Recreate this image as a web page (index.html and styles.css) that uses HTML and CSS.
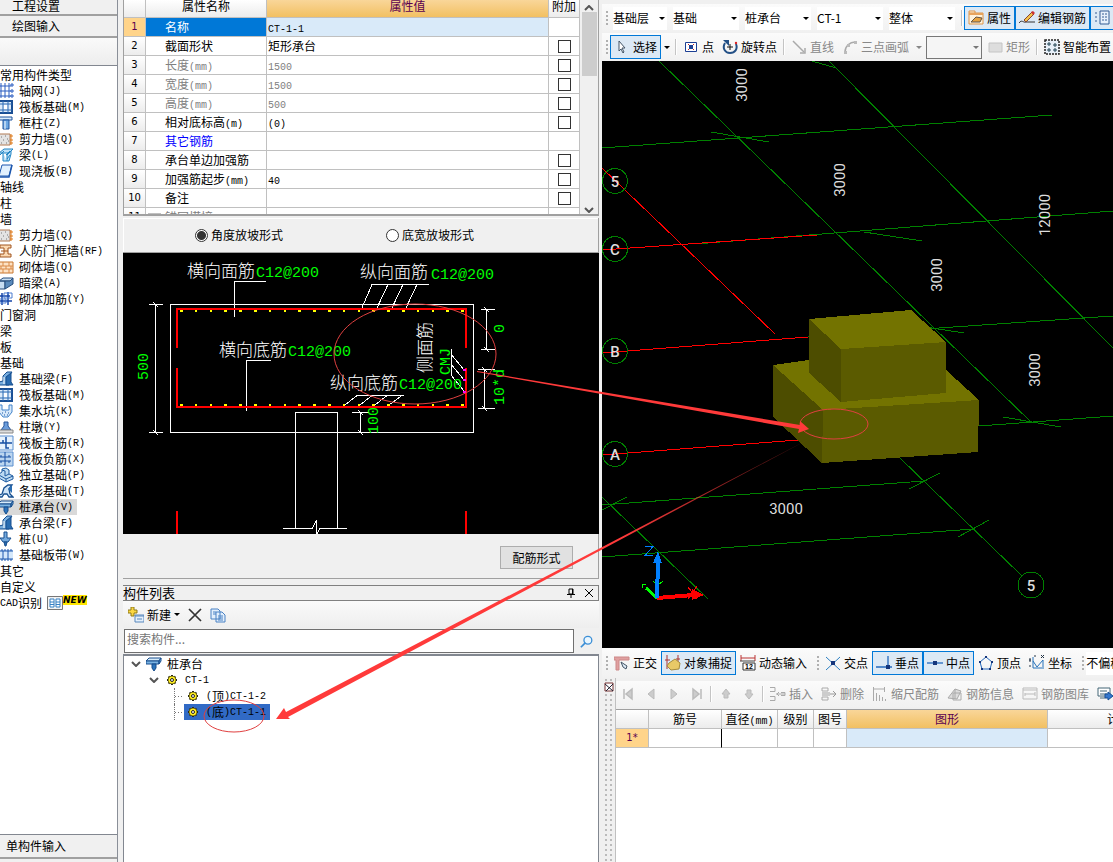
FILE: index.html
```
<!DOCTYPE html>
<html lang="zh-CN">
<head>
  <meta charset="utf-8">
  <title>构件定义</title>
  <link rel="stylesheet" href="styles.css">
</head>
<body>
  <!-- icon set -->
  <svg class="defs" width="0" height="0">
    <symbol id="i-grid" viewBox="0 0 16 16"><path d="M0 3h13M0 8h13M0 13h13M3 0v15M7 0v15M11 0v15" stroke="#2a5cc0" fill="none"/><path d="M13 1h2v2h-2zM13 7h2v2h-2zM13 12h2v2h-2z" fill="none" stroke="#2a5cc0"/></symbol>
    <symbol id="i-raft" viewBox="0 0 16 16"><path d="M1 2h13v12H1z" fill="#dcebfa" stroke="#1a4f94" stroke-width="2"/><path d="M1 5h13M1 11h13M5 2v12M10 2v12" stroke="#2f6cb5"/><path d="M6 6h3v4H6z" fill="#fff"/></symbol>
    <symbol id="i-column" viewBox="0 0 16 16"><path d="M1 2h13v3H1z" fill="#d9ecfb" stroke="#1f559f"/><path d="M5 5h6v9H5z" fill="#6ea8e4" stroke="#1f559f"/><path d="M7 6v8" stroke="#fff"/></symbol>
    <symbol id="i-wall" viewBox="0 0 16 16"><path d="M0 3h12v11H0z" fill="#e3e3e3" stroke="#b07a55"/><path d="M3 6h1M7 5h1M5 9h1M9 8h1M3 12h1M8 12h1M10 10h1" stroke="#777"/><path d="M13 3v11M12 5h3M12 9h3M12 12h3" stroke="#e07a18"/></symbol>
    <symbol id="i-beam" viewBox="0 0 16 16"><path d="M1 6l5-4h9l-4 4zM5 6v8h4V8l4-4v3l-2 7H9" fill="#bfe1f7" stroke="#2385c4"/><path d="M2 8l4-4M8 8l4-4M9 12l3-4" stroke="#2385c4"/></symbol>
    <symbol id="i-slab" viewBox="0 0 16 16"><path d="M4 2h10l-3 11H1z" fill="#e2f1fe" stroke="#1d57ae"/><path d="M1 13v1h10l3-12" fill="none" stroke="#1d57ae" stroke-width="1.5"/></symbol>
    <symbol id="i-door" viewBox="0 0 16 16"><path d="M2 2h11v3h-3v6h3v3H2v-3h4V5H2z" fill="#fbd9b3" stroke="#a1541f"/><path d="M3 8h7" stroke="#a1541f"/></symbol>
    <symbol id="i-brick" viewBox="0 0 16 16"><path d="M0 3h15v11H0z" fill="#fde2c4" stroke="#c8762f"/><path d="M0 7h15M0 10h15M5 3v4M11 3v4M3 7v3M8 7v3M13 7v3M5 10v4M11 10v4" stroke="#d98a48"/></symbol>
    <symbol id="i-box" viewBox="0 0 16 16"><path d="M1 6l4-3h10l-3 3zM1 6h6v8H1z" fill="#c8def2" stroke="#244d7c"/><path d="M7 6h5l3-3v6l-8 5z" fill="#5a8abb" stroke="#244d7c"/></symbol>
    <symbol id="i-rebar" viewBox="0 0 16 16"><path d="M0 5h12M0 10h14M4 2v12M10 1v13" stroke="#1646a8" stroke-width="1.5"/><path d="M6 2h8v5H6zM1 8h7v4H1z" fill="none" stroke="#4a7dd0"/></symbol>
    <symbol id="i-fbeam" viewBox="0 0 16 16"><path d="M1 14v-3l4-1V5l4-4h5l-3 4v9z" fill="#79aede" stroke="#174f8f"/><path d="M8 6l5-4v9l2 3H8z" fill="#2a6db1" stroke="#174f8f"/><path d="M6 6v7" stroke="#fff"/></symbol>
    <symbol id="i-pit" viewBox="0 0 16 16"><path d="M1 2h3v5h7V2h3v7l-4 5H5L1 9z" fill="#d6e8fa" stroke="#4284ca"/><path d="M4 10h1M7 9h1M10 10h1M6 12h1M9 12h1" stroke="#1b58a6"/></symbol>
    <symbol id="i-pier" viewBox="0 0 16 16"><path d="M6 3h4v4l3 4H3l3-4z" fill="#6c9ddb" stroke="#26569b"/><path d="M0 11h15v3H0z" fill="#ddd" stroke="#888"/></symbol>
    <symbol id="i-main" viewBox="0 0 16 16"><path d="M0 1h15v14H0z" fill="#e6f1fc" stroke="#5b8fd0"/><path d="M2 8h12M8 2v6M5 5v3M8 8v5h3" stroke="#174fa3" stroke-width="1.5" fill="none"/></symbol>
    <symbol id="i-neg" viewBox="0 0 16 16"><path d="M0 1h15v14H0z" fill="#bcd6f0" stroke="#5b8fd0"/><path d="M1 6h12M1 10h12M7 1v14M3 4v2M11 4v2M3 10v2M11 10v2" stroke="#174fa3"/></symbol>
    <symbol id="i-iso" viewBox="0 0 16 16"><path d="M1 7l3-2V2l4-1 3 2v4l4 2v3l-7 3-7-4z" fill="#bcdaf3" stroke="#1e5ba0"/><path d="M4 3l3 1v5l4-2M1 8l7 4 7-3M8 12v3" fill="none" stroke="#1e5ba0"/></symbol>
    <symbol id="i-strip" viewBox="0 0 16 16"><path d="M1 14v-2l3-1 2-6 4-3h4l-3 4 1 5 3 3h-4l-2-3-3 0-2 3z" fill="#cfe4f7" stroke="#174f8f" stroke-width="1.3"/><path d="M10 6l4-4v8z" fill="#2a6db1"/></symbol>
    <symbol id="i-cap" viewBox="0 0 16 16"><path d="M0 5l3-3h12l-2 3z" fill="#d6ebfa" stroke="#164d8c"/><path d="M0 5h13v3H0zM13 5l2-3v3l-2 3z" fill="#7ab4e4" stroke="#164d8c"/><path d="M6 8h4v4l-2 3-2-3z" fill="#2d75bc" stroke="#164d8c"/></symbol>
    <symbol id="i-pile" viewBox="0 0 16 16"><path d="M6 1h3v6h4l-3 4H5L2 7h4z" fill="#74a9dc" stroke="#174f8f"/><path d="M6 11h3l-1 4H7z" fill="#2a6db1" stroke="#174f8f"/></symbol>
    <symbol id="i-band" viewBox="0 0 16 16"><path d="M0 3h15v10H0z" fill="#d5e8fb"/><path d="M0 4h15M0 12h15M5 4v8M10 4v8" stroke="#1d57ae"/><path d="M0 3h15M0 13h15" stroke="#1d57ae" stroke-dasharray="2 1"/></symbol>
    <symbol id="i-gear" viewBox="0 0 16 16"><path d="M8 3v10M3 8h10M4.500 4.500l7 7M11.500 4.500l-7 7" stroke="#222" stroke-width="2"/><circle cx="8" cy="8" r="4" fill="#ffee20" stroke="#443d00" stroke-width=".7"/><circle cx="8" cy="8" r="1.500" fill="#fff" stroke="#222"/></symbol>
    <symbol id="i-cursor" viewBox="0 0 16 16"><path d="M5 2v10l2-2 2 4 1-1-2-4h3z" fill="#fff" stroke="#456"/></symbol>
    <symbol id="i-point" viewBox="0 0 16 16"><path d="M2.500 3.500h11v9h-11z" fill="#fff" stroke="#1c3f94"/><path d="M5 5l6 6M11 5l-6 6" stroke="#c22"/><path d="M6 6h4v4H6z" fill="#1c3f94"/></symbol>
    <symbol id="i-rotate" viewBox="0 0 16 16"><path d="M3 4c-3 5 0 10 5 10s8-4 6-9" fill="none" stroke="#235086" stroke-width="2"/><path d="M1 1h6v6z" fill="#235086"/><path d="M5 8h6M8 5v6" stroke="#111"/><circle cx="14" cy="4" r="1.2" fill="#d22"/></symbol>
    <symbol id="i-line" viewBox="0 0 16 16"><path d="M2 2l11 11" stroke="#aaa" stroke-width="1.5"/><path d="M14 9v5H9" fill="none" stroke="#aaa" stroke-width="1.5"/></symbol>
    <symbol id="i-arc" viewBox="0 0 16 16"><path d="M3 13C3 7 8 3 13 3" fill="none" stroke="#aaa" stroke-width="1.5"/><path d="M2 12h3v3H2zM12 2h3v3h-3zM5 5h3v3H5z" fill="#bbb"/></symbol>
    <symbol id="i-rect" viewBox="0 0 16 16"><path d="M2 4h13v9H2z" fill="#ddd" stroke="#c4c4c4"/></symbol>
    <symbol id="i-smart" viewBox="0 0 16 16"><path d="M1 1h14v14H1z" fill="#e9f1fa" stroke="#222" stroke-width="1.5" stroke-dasharray="2 1"/><path d="M3 5h4M5 3v4M9 6h4M11 4v4M3 11h4M5 9v4M9 11h4M11 9v4" stroke="#245"/></symbol>
    <symbol id="i-prop" viewBox="0 0 16 16"><path d="M1 3V1h6v2M1 3h14v11H1z" fill="#fff3dc" stroke="#dd9448"/><path d="M3 12l5-5 6 1-2 4z" fill="#e8a440" stroke="#654"/><path d="M1 3h14v2H1z" fill="#e8a45c"/></symbol>
    <symbol id="i-edit" viewBox="0 0 16 16"><path d="M0 13c3-4 4 0 7-1h9" fill="none" stroke="#333"/><path d="M5 10l8-8 2 2-8 8z" fill="#f3c24c" stroke="#843"/><path d="M12 2l2-1 2 2-2 2z" fill="#c33"/></symbol>
    <symbol id="i-panel" viewBox="0 0 16 16"><path d="M6 1h9v13H6z" fill="#e8f1fc" stroke="#345c94"/><path d="M8 4h5M8 7h5M8 10h5M1 3h3M1 7h3M1 11h3" stroke="#345c94" stroke-dasharray="2 1"/></symbol>
    <symbol id="i-ortho" viewBox="0 0 16 16"><path d="M0 2h15v3H5v10H2V5H0z" fill="#e0a0a0" stroke="#c88"/><path d="M7 7l6 4-1 3-3-2z" fill="#dbe7f3" stroke="#456"/></symbol>
    <symbol id="i-snap" viewBox="0 0 16 16"><path d="M2 0v14M0 5h5M13 0v7M11 4h4" stroke="#a33"/><path d="M4 8l6-4 5 4-1 6-8 1-4-4z" fill="#e9c967" stroke="#a58b3d"/></symbol>
    <symbol id="i-dyn" viewBox="0 0 16 16"><path d="M1 0v6M15 0v6M1 3h14" stroke="#b33"/><path d="M0 6h15" stroke="#444"/><path d="M3 8h12v7H3z" fill="#fff" stroke="#333"/><text x="5" y="14" class="tiny">12</text></symbol>
    <symbol id="i-cross" viewBox="0 0 16 16"><path d="M1 2l14 13M15 2L1 15" stroke="#2d81c4"/><path d="M6 6h4v4H6z" fill="#15367c"/></symbol>
    <symbol id="i-perp" viewBox="0 0 16 16"><path d="M0 12h16M12 1v13" stroke="#2469bd" stroke-width="1.3"/><path d="M10 10h4v4h-4z" fill="#15367c"/></symbol>
    <symbol id="i-mid" viewBox="0 0 16 16"><path d="M0 8h16" stroke="#2469bd" stroke-width="1.3"/><path d="M6 6h4v4H6z" fill="#15367c"/></symbol>
    <symbol id="i-top" viewBox="0 0 16 16"><path d="M8 2l6 5-2 7H4L2 7z" fill="none" stroke="#2469bd"/><path d="M7 1h2v2H7zM1 6h2v2H1zM13 6h2v2h-2zM3 13h2v2H3zM11 13h2v2h-2z" fill="#15367c"/></symbol>
    <symbol id="i-coord" viewBox="0 0 16 16"><path d="M4 2v11h11M4 6l4 6 6-7v7" fill="none" stroke="#2672ba"/><path d="M0 5h2M1 3v4M0 11h2M5 1h2M12 0l3 3M15 0l-3 3" stroke="#234"/></symbol>
    <symbol id="i-first" viewBox="0 0 16 16"><path d="M4 3v10M12 3v10L6 8z" fill="#ccc" stroke="#bbb" stroke-width="1.5"/></symbol>
    <symbol id="i-prev" viewBox="0 0 16 16"><path d="M11 3v10L5 8z" fill="#ccc" stroke="#bbb"/></symbol>
    <symbol id="i-next" viewBox="0 0 16 16"><path d="M5 3v10l6-5z" fill="#ccc" stroke="#bbb"/></symbol>
    <symbol id="i-last" viewBox="0 0 16 16"><path d="M12 3v10M4 3v10l6-5z" fill="#ccc" stroke="#bbb" stroke-width="1.5"/></symbol>
    <symbol id="i-up" viewBox="0 0 16 16"><path d="M8 3l4 5h-2v4H6V8H4z" fill="#ccc" stroke="#bbb"/></symbol>
    <symbol id="i-down" viewBox="0 0 16 16"><path d="M8 13l4-5h-2V4H6v4H4z" fill="#ccc" stroke="#bbb"/></symbol>
    <symbol id="i-insert" viewBox="0 0 16 16"><path d="M0 1.500h5v4H0M0 10.500h5v4H0M6 8h9M9 6L7 8l2 2M11 6.500h4v3h-4" fill="none" stroke="#aaa"/></symbol>
    <symbol id="i-delete" viewBox="0 0 16 16"><path d="M1 2h6v3H1zM1 11h6v3H1z" fill="none" stroke="#aaa"/><path d="M1 6h8v4H1z" fill="#ccc"/><path d="M9 8h6M12 5l3 3-3 3" fill="none" stroke="#999"/></symbol>
    <symbol id="i-scale" viewBox="0 0 16 16"><path d="M1.500 1v14M12.500 1v5M2 3h10M4.500 7v8M7.500 9v6M10.500 11v4M13.500 13v2" stroke="#aaa"/></symbol>
    <symbol id="i-info" viewBox="0 0 16 16"><path d="M1 12l7-9 6 2-4 8z" fill="#ddd" stroke="#aaa"/><path d="M6 7h8v7H6zM8 3v10" fill="none" stroke="#aaa"/></symbol>
    <symbol id="i-lib" viewBox="0 0 16 16"><path d="M1 2h14v11H1zM1 4h14M3 8h10M3 10V7M13 6v4" fill="none" stroke="#bbb"/></symbol>
    <symbol id="i-export" viewBox="0 0 16 16"><path d="M1 2h12v8H1zM3 5h7M3 8h7M3 12h5" fill="#fff" stroke="#467"/><path d="M8 8h3V6l5 4-5 4v-2H8z" fill="#3478cf" stroke="#174f94"/></symbol>
  </svg>

  <div class="app">
    <aside class="sidebar">
      <button class="nav-btn nav-top">工程设置</button>
      <button class="nav-btn">绘图输入</button>
      <div class="nav-strip"></div>
      <ul class="types">
        <li>常用构件类型</li>
        <li class="item"><svg><use href="#i-grid"/></svg>轴网<i>(J)</i></li>
        <li class="item"><svg><use href="#i-raft"/></svg>筏板基础<i>(M)</i></li>
        <li class="item"><svg><use href="#i-column"/></svg>框柱<i>(Z)</i></li>
        <li class="item"><svg><use href="#i-wall"/></svg>剪力墙<i>(Q)</i></li>
        <li class="item"><svg><use href="#i-beam"/></svg>梁<i>(L)</i></li>
        <li class="item"><svg><use href="#i-slab"/></svg>现浇板<i>(B)</i></li>
        <li>轴线</li>
        <li>柱</li>
        <li>墙</li>
        <li class="item"><svg><use href="#i-wall"/></svg>剪力墙<i>(Q)</i></li>
        <li class="item"><svg><use href="#i-door"/></svg>人防门框墙<i>(RF)</i></li>
        <li class="item"><svg><use href="#i-brick"/></svg>砌体墙<i>(Q)</i></li>
        <li class="item"><svg><use href="#i-box"/></svg>暗梁<i>(A)</i></li>
        <li class="item"><svg><use href="#i-rebar"/></svg>砌体加筋<i>(Y)</i></li>
        <li>门窗洞</li>
        <li>梁</li>
        <li>板</li>
        <li>基础</li>
        <li class="item"><svg><use href="#i-fbeam"/></svg>基础梁<i>(F)</i></li>
        <li class="item"><svg><use href="#i-raft"/></svg>筏板基础<i>(M)</i></li>
        <li class="item"><svg><use href="#i-pit"/></svg>集水坑<i>(K)</i></li>
        <li class="item"><svg><use href="#i-pier"/></svg>柱墩<i>(Y)</i></li>
        <li class="item"><svg><use href="#i-main"/></svg>筏板主筋<i>(R)</i></li>
        <li class="item"><svg><use href="#i-neg"/></svg>筏板负筋<i>(X)</i></li>
        <li class="item"><svg><use href="#i-iso"/></svg>独立基础<i>(P)</i></li>
        <li class="item"><svg><use href="#i-strip"/></svg>条形基础<i>(T)</i></li>
        <li class="item active"><svg><use href="#i-cap"/></svg>桩承台<i>(V)</i></li>
        <li class="item"><svg><use href="#i-fbeam"/></svg>承台梁<i>(F)</i></li>
        <li class="item"><svg><use href="#i-pile"/></svg>桩<i>(U)</i></li>
        <li class="item"><svg><use href="#i-band"/></svg>基础板带<i>(W)</i></li>
        <li>其它</li>
        <li>自定义</li>
        <li class="cad"><i>CAD</i>识别<svg viewBox="0 0 16 16"><path d="M.5 1.500h15v13H.5z" fill="#f2f2f2" stroke="#777"/><path d="M3 4h4v8H3zM9 4h4v8H9zM3 7h4M9 7h4M3 9.500h4M9 9.500h4" fill="#fff" stroke="#3580c4"/></svg><b>NEW</b></li>
      </ul>
      <button class="nav-btn nav-bottom">单构件输入</button>
    </aside>

    <section class="middle">
      <div class="props">
        <table class="grid">
          <colgroup><col class="c-num"><col class="c-name"><col class="c-val"><col class="c-add"></colgroup>
          <thead><tr><th></th><th>属性名称</th><th class="hot">属性值</th><th>附加</th></tr></thead>
          <tbody>
            <tr class="current"><th>1</th><td>名称</td><td><i>CT-1-1</i></td><td></td></tr>
            <tr><th>2</th><td>截面形状</td><td>矩形承台</td><td><input type="checkbox" aria-label="截面形状"></td></tr>
            <tr class="off"><th>3</th><td>长度<i>(mm)</i></td><td><i>1500</i></td><td><input type="checkbox" aria-label="长度"></td></tr>
            <tr class="off"><th>4</th><td>宽度<i>(mm)</i></td><td><i>1500</i></td><td><input type="checkbox" aria-label="宽度"></td></tr>
            <tr class="off"><th>5</th><td>高度<i>(mm)</i></td><td><i>500</i></td><td><input type="checkbox" aria-label="高度"></td></tr>
            <tr><th>6</th><td>相对底标高<i>(m)</i></td><td><i>(0)</i></td><td><input type="checkbox" aria-label="相对底标高"></td></tr>
            <tr class="link"><th>7</th><td>其它钢筋</td><td></td><td></td></tr>
            <tr><th>8</th><td>承台单边加强筋</td><td></td><td><input type="checkbox" aria-label="承台单边加强筋"></td></tr>
            <tr><th>9</th><td>加强筋起步<i>(mm)</i></td><td><i>40</i></td><td><input type="checkbox" aria-label="加强筋起步"></td></tr>
            <tr><th>10</th><td>备注</td><td></td><td><input type="checkbox" aria-label="备注"></td></tr>
            <tr class="off group"><th>11</th><td><span class="toggle"></span>锚固搭接</td><td></td><td></td></tr>
          </tbody>
        </table>
        <div class="scroll">
          <button aria-label="向上"><svg viewBox="0 0 10 6"><path d="M1 5l4-4 4 4"/></svg></button>
          <div class="thumb"></div>
          <button class="down" aria-label="向下"><svg viewBox="0 0 10 6"><path d="M1 1l4 4 4-4"/></svg></button>
        </div>
      </div>

      <div class="slope">
        <label><input type="radio" name="slope" checked>角度放坡形式</label>
        <label><input type="radio" name="slope">底宽放坡形式</label>
      </div>

      <svg class="section" viewBox="123 253 476 281">
        <path class="w" d="M170.500 304.500h303v128h-303zM295.500 528v-115.500h42V528M283 528.500h29l4-7v14l4-7h27"/>
        <path class="w" d="M266 281.500h-31.500V317M271 360.500h-24.500V411M149 304.500h14M149 432.500h14M155.500 304.500v128M153 302l5 5M153 430l5 5"/>
        <path class="w" d="M429 284.500h-57L361 310M388 284.500L376 310M403 284.500L391 310M417 284.500L405 310M404 395.500h-47L345 405M372 395.500L360 405M387 395.500L375 405M402 395.500L389 405"/>
        <path class="w" d="M481 309.500h14M481 349.500h14M486.500 309v40M484 307l5 5M484 347l5 5M478 369.500h17M478 408.500h17M484.500 369v39M482 367l5 5M482 406l5 5M352 412.500h17M360.500 412v20M358 410l5 5M358 430l5 5"/>
        <path class="w" d="M451.500 349v27M451 354l13 16M451 364l13 16M451 375l13 16"/>
        <path class="r" d="M177 348v-39h289v39M177 368v39h289v-39M177 511v23M466 511v23"/>
        <path class="dots" d="M180 310.500h287M180 404.500h287"/>
        <path d="M463 369h3v2h-3zM463 379h3v2h-3zM463 391h3v2h-3z" fill="#f0f"/>
        <g class="cn"><text x="187" y="277">横向面筋</text><text x="360" y="278">纵向面筋</text><text x="219" y="356">横向底筋</text><text x="330" y="389">纵向底筋</text><text transform="translate(431 373) rotate(-90)">侧面筋</text></g>
        <g class="en"><text x="256" y="277">C12@200</text><text x="431" y="279">C12@200</text><text x="288" y="356">C12@200</text><text x="399" y="389">C12@200</text>
          <text transform="translate(148 380) rotate(-90)">500</text><text transform="translate(450 375) rotate(-90)">CMJ</text><text transform="translate(504 333) rotate(-90)">0</text><text transform="translate(504 405) rotate(-90)">10*d</text><text transform="translate(378 434) rotate(-90)">100</text></g>
      </svg>
      <div class="section-foot"><button>配筋形式</button></div>

      <div class="list-title"><span>构件列表</span>
        <button aria-label="固定"><svg viewBox="0 0 10 10"><path d="M3 1h4v5H3zM1 6.500h8M5 6v4M6.500 1v5"/></svg></button>
        <button aria-label="关闭"><svg viewBox="0 0 10 10"><path d="M1 1l8 8M9 1L1 9"/></svg></button>
      </div>
      <div class="list-bar">
        <button><svg viewBox="0 0 16 16"><path d="M3 0h3v3h3v3H6v3H3V6H0V3h3z" fill="#fbd743" stroke="#8f7a18"/><path d="M7 8h9v7H7z" fill="#e4f0fc" stroke="#5987bc"/><path d="M7 9h9M9 12h5" stroke="#5987bc"/></svg>新建<span class="caret"></span></button>
        <button aria-label="删除"><svg viewBox="0 0 16 16"><path d="M2 2l12 12M14 2L2 14" stroke="#333" stroke-width="1.700"/></svg></button>
        <button aria-label="复制"><svg viewBox="0 0 16 16"><path d="M1 2h7l2 2v8H1zM6 5h6l3 3v7H6z" fill="#e3effc" stroke="#4a82c4"/><path d="M3 5h3M3 7h3M8 9h5M8 11h5M8 13h5" stroke="#4a82c4"/></svg></button>
      </div>
      <div class="search">
        <input type="text" placeholder="搜索构件..." aria-label="搜索构件">
        <button aria-label="搜索"><svg viewBox="0 0 16 16"><circle cx="9" cy="6" r="4.500" fill="#e9f6ff" stroke="#3c8fd6" stroke-width="1.500"/><path d="M6 9l-5 5" stroke="#3c8fd6" stroke-width="2"/></svg></button>
      </div>
      <ul class="tree">
        <li><svg class="chev" viewBox="0 0 10 6"><path d="M1 1l4 4 4-4"/></svg><svg><use href="#i-cap"/></svg>桩承台</li>
        <li class="lv2"><svg class="chev" viewBox="0 0 10 6"><path d="M1 1l4 4 4-4"/></svg><svg><use href="#i-gear"/></svg><i>CT-1</i></li>
        <li class="lv3"><span class="node"><svg><use href="#i-gear"/></svg><i>(</i>顶<i>)CT-1-2</i></span></li>
        <li class="lv3"><span class="node picked"><svg><use href="#i-gear"/></svg><i>(</i>底<i>)CT-1-1</i></span></li>
      </ul>
    </section>

    <main class="work">
      <div class="bar bar-top">
        <span class="grip"></span>
        <label class="combo short"><select aria-label="楼层"><option>基础层</option></select></label>
        <label class="combo"><select aria-label="类别"><option>基础</option></select></label>
        <label class="combo"><select aria-label="类型"><option>桩承台</option></select></label>
        <label class="combo"><select aria-label="构件"><option>CT-1</option></select></label>
        <label class="combo"><select aria-label="范围"><option>整体</option></select></label>
        <span class="sep"></span>
        <button class="tool on"><svg><use href="#i-prop"/></svg>属性</button>
        <button class="tool on"><svg><use href="#i-edit"/></svg>编辑钢筋</button>
        <button class="tool on" aria-label="列表"><svg><use href="#i-panel"/></svg></button>
      </div>
      <div class="bar bar-draw">
        <span class="grip"></span>
        <button class="tool on"><svg><use href="#i-cursor"/></svg>选择</button>
        <button class="drop" aria-label="更多"><span class="caret"></span></button>
        <span class="sep"></span>
        <button class="tool"><svg><use href="#i-point"/></svg>点</button>
        <button class="tool"><svg><use href="#i-rotate"/></svg>旋转点</button>
        <span class="sep"></span>
        <button class="tool dim"><svg><use href="#i-line"/></svg>直线</button>
        <button class="tool dim"><svg><use href="#i-arc"/></svg>三点画弧</button>
        <button class="drop dim" aria-label="更多"><span class="caret"></span></button>
        <label class="combo boxed"><select aria-label="参数"><option></option></select></label>
        <button class="tool dim"><svg><use href="#i-rect"/></svg>矩形</button>
        <span class="sep"></span>
        <button class="tool"><svg><use href="#i-smart"/></svg>智能布置</button>
      </div>

      <svg class="view3d" viewBox="602 61 511 587" preserveAspectRatio="xMinYMin slice">
        <path class="axis" d="M602 148L1052 115M695 244L1113 211M808 337L1113 316M979 426L1113 416M602 505L924 481M602 557L973 529M659 61L1032 423M829 61L1113 348M900 458L1022 576M602 497L708 599"/>
        <path class="axis" d="M711 132l58 10M864 232l58 9M906 324l58 9M1003 417l58 10M909 489l31-16M958 537l31-17M602 510l25-13M812 61l24 7"/>
        <path class="red" d="M602 168L775 334M602 250L817 235M602 353L808 337M602 455L798 440"/>
        <circle cx="615" cy="181" r="12.500"/><circle cx="615" cy="249" r="12.500"/><circle cx="615" cy="351" r="12.500"/><circle cx="615" cy="454" r="12.500"/><circle cx="1031" cy="585" r="13"/>
        <path d="M773 365l36-5v-30l137 40 33 30-156 10z" fill="#737300"/>
        <path d="M773 365l50 45-1 53-49-46z" fill="#4d4d00"/>
        <path d="M823 410l156-10-1 52-156 11z" fill="#5b5b00"/>
        <path d="M809 319l102-9 35 32-105 7z" fill="#737300"/>
        <path d="M809 319l32 30v53l-32-29z" fill="#4d4d00"/>
        <path d="M841 349l105-7v51l-105 9z" fill="#5b5b00"/>
        <g class="dim3">
          <text class="mark" x="615" y="187">5</text><text class="mark" x="615" y="255">C</text><text class="mark" x="615" y="357">B</text><text class="mark" x="615" y="460">A</text><text class="mark" x="1031" y="591">5</text><text x="786" y="514">3000</text>
          <text transform="translate(747 85) rotate(-90)">3000</text><text transform="translate(845 180) rotate(-90)">3000</text><text transform="translate(942 275) rotate(-90)">3000</text><text transform="translate(1040 370) rotate(-90)">3000</text><text transform="translate(1050 215) rotate(-90)">12000</text>
        </g>
        <path d="M657 598l36-3" stroke="#f00" stroke-width="4"/><path d="M692 589l12 6-12 5z" fill="#f00"/><path d="M688 587l9 12M697 586l-9 13" stroke="#f00"/>
        <path d="M657 598l-11-10" stroke="#0f0" stroke-width="3"/><path d="M642 588v-4h4M653 581l5 4 5-4" stroke="#0f0" fill="none"/>
        <path d="M657 598l1-37" stroke="#0080ff" stroke-width="4"/><path d="M653 563l5-12 4 12z" fill="#0080ff"/><path d="M645 546.500h8l-8 9h8" stroke="#0080ff" fill="none"/>
      </svg>

      <div class="bar bar-snap">
        <span class="grip"></span>
        <button class="tool"><svg><use href="#i-ortho"/></svg>正交</button>
        <button class="tool on"><svg><use href="#i-snap"/></svg>对象捕捉</button>
        <button class="tool"><svg><use href="#i-dyn"/></svg>动态输入</button>
        <span class="grip second"></span>
        <button class="tool"><svg><use href="#i-cross"/></svg>交点</button>
        <button class="tool on"><svg><use href="#i-perp"/></svg>垂点</button>
        <button class="tool on"><svg><use href="#i-mid"/></svg>中点</button>
        <button class="tool"><svg><use href="#i-top"/></svg>顶点</button>
        <button class="tool"><svg><use href="#i-coord"/></svg>坐标</button>
        <span class="grip second"></span>
        <label class="combo"><select aria-label="偏移"><option>不偏移</option></select></label>
      </div>

      <div class="rebar">
        <div class="dock"><button aria-label="关闭"><svg viewBox="0 0 10 10"><path d="M1 1h8v8H1z" fill="#fff" stroke="#733"/><path d="M1 2l8 7M9 2L2 9" stroke="#223"/></svg></button></div>
        <div class="rebar-main">
          <div class="bar bar-edit">
            <button class="tool sq" aria-label="首条"><svg><use href="#i-first"/></svg></button>
            <button class="tool sq" aria-label="上一条"><svg><use href="#i-prev"/></svg></button>
            <button class="tool sq" aria-label="下一条"><svg><use href="#i-next"/></svg></button>
            <button class="tool sq" aria-label="末条"><svg><use href="#i-last"/></svg></button>
            <span class="sep"></span>
            <button class="tool sq" aria-label="上移"><svg><use href="#i-up"/></svg></button>
            <button class="tool sq" aria-label="下移"><svg><use href="#i-down"/></svg></button>
            <span class="sep"></span>
            <button class="tool dim"><svg><use href="#i-insert"/></svg>插入</button>
            <button class="tool dim"><svg><use href="#i-delete"/></svg>删除</button>
            <button class="tool dim"><svg><use href="#i-scale"/></svg>缩尺配筋</button>
            <button class="tool dim"><svg><use href="#i-info"/></svg>钢筋信息</button>
            <button class="tool dim"><svg><use href="#i-lib"/></svg>钢筋图库</button>
            <button class="tool sq" aria-label="导出"><svg><use href="#i-export"/></svg></button>
          </div>
          <div class="sheet">
            <table class="grid bars">
              <colgroup><col class="b-num"><col class="b-name"><col class="b-dia"><col class="b-lvl"><col class="b-fig"><col class="b-shape"><col class="b-calc"></colgroup>
              <thead><tr><th></th><th>筋号</th><th>直径<i>(mm)</i></th><th>级别</th><th>图号</th><th class="hot">图形</th><th>计算公式</th></tr></thead>
              <tbody><tr><th class="mark">1*</th><td class="edit"></td><td></td><td></td><td></td><td class="focus"></td><td></td></tr></tbody>
            </table>
          </div>
        </div>
      </div>
    </main>
  </div>

  <!-- red callouts drawn over the panels -->
  <svg class="marks" viewBox="0 0 1113 862" preserveAspectRatio="xMinYMin">
    <defs><linearGradient id="fade" x1="1" y1="0" x2="0" y2="0"><stop offset="0" stop-color="#ff3a3a" stop-opacity=".2"/><stop offset=".35" stop-color="#ff3a3a"/></linearGradient></defs>
    <ellipse cx="415" cy="354" rx="81" ry="50"/>
    <ellipse cx="834" cy="424" rx="34" ry="15"/>
    <ellipse cx="234" cy="716" rx="30" ry="16"/>
    <path d="M477 371l323 54v-4l9 8-11 4 1-4-322-57z" fill="#ff3a3a"/>
    <path d="M811 438L288 717l2 2-14 0 8-11 2 4z" fill="url(#fade)"/>
  </svg>
</body>
</html>
```
FILE: styles.css
```
* {
  box-sizing: border-box;
}

body {
  margin: 0;
  height: 100vh;
  overflow: hidden;
  background: #f0f0f0;
  color: #000;
  font: 12px/16px "Noto Sans CJK SC", sans-serif;
}

button, input, select {
  font: inherit;
  color: inherit;
}

button {
  padding: 0;
  border: 0;
  background: none;
  white-space: nowrap;
}

/* latin text inside labels */
i {
  font: 10px/10px "Liberation Mono", monospace;
}

ul {
  list-style: none;
  margin: 0;
  padding: 0;
}

svg {
  flex: none;
  fill: none;
}

.defs {
  position: absolute;
}

.app {
  display: flex;
  height: 100vh;
}

/* left navigation */
.sidebar {
  flex: 0 0 118px;
  display: flex;
  flex-direction: column;
  margin-right: 5px;
  border-right: 1px solid #8a8f98;
}

.nav-btn {
  height: 22px;
  padding-left: 12px;
  text-align: left;
  border-bottom: 2px solid #a0a0a0;
  background: #f0f0f0;
}

.nav-top {
  height: 16px;
  line-height: 12px;
  padding-bottom: 2px;
}

.nav-strip {
  height: 28px;
  border-bottom: 1px solid #828790;
  background: linear-gradient(#fafafa, #ededed);
}

.types {
  flex: 1;
  overflow: hidden;
  background: #fff;
  border-bottom: 1px solid #828790;
  padding-top: 1px;
}

.types li {
  display: flex;
  align-items: center;
  width: fit-content;
  height: 16px;
  white-space: nowrap;
}

.types svg, .tree svg, .tool svg, .list-bar svg {
  width: 16px;
  height: 16px;
}

.types i, .tree i {
  padding-top: 2px;
}

.types .item {
  margin-left: -2px;
  padding-right: 4px;
}

.item svg {
  margin-right: 5px;
}

.types .active {
  background: #d9d9d9;
}

.cad svg {
  margin-left: 5px;
}

.cad b {
  align-self: flex-start;
  font: italic bold 9px/10px "DejaVu Sans", sans-serif;
  background: #ffe500;
}

.nav-bottom {
  height: 24px;
  margin-bottom: 3px;
  padding-left: 6px;
}

/* properties */
.middle {
  flex: 0 0 476px;
  display: flex;
  flex-direction: column;
  margin-right: 3px;
}

.props {
  display: flex;
  flex: none;
  height: 216px;
  overflow: hidden;
  margin-bottom: 2px;
  border: 1px solid #a0a0a0;
  border-width: 0 1px 2px 1px;
  background: #fff;
}

.grid {
  table-layout: fixed;
  border-collapse: separate;
  border-spacing: 0;
  align-self: flex-start;
}

.grid th, .grid td {
  height: 19px;
  padding: 0;
  overflow: hidden;
  white-space: nowrap;
  border: solid #c0c0c0;
  border-width: 0 1px 1px 0;
  font-weight: normal;
  line-height: 16px;
}

.grid th {
  background: linear-gradient(#fff, #ececec);
}

.props .grid {
  width: 456px;
}

.props thead th {
  height: 18px;
  line-height: 12px;
  padding-bottom: 5px;
}

.grid .hot {
  background: linear-gradient(#f9d699, #f2c062);
  color: #5a0050;
}

.c-num { width: 22px; }
.c-name { width: 121px; }
.c-val { width: 282px; }
.c-add { width: 31px; }

.props tbody th {
  font: 10px/16px "DejaVu Sans", sans-serif;
}

.props td:nth-child(2) {
  padding-left: 19px;
}

.props td:nth-child(3) {
  padding-left: 1px;
}

.props td:nth-child(4) {
  text-align: center;
}

.grid input {
  appearance: none;
  display: block;
  width: 13px;
  height: 13px;
  margin: 0 auto;
  border: 1px solid #333;
  background: #fff;
}

.current th, .grid .mark {
  background: #ffd48a;
  color: #5a0050;
}

.current td:nth-child(2) {
  background: #0078d7;
  color: #fff;
}

.current td:nth-child(3), .grid .focus {
  background: #d9eaf9;
}

.off td {
  color: #808080;
}

.link td {
  color: #00f;
}

.props .group td:nth-child(2) {
  padding-left: 2px;
}

.toggle {
  display: inline-block;
  width: 13px;
  height: 12px;
  margin-right: 4px;
  vertical-align: -3px;
  border: 1px solid #c0c0c0;
}

.scroll {
  flex: 1;
  display: flex;
  flex-direction: column;
  align-items: center;
  background: #f0f0f0;
}

.scroll button {
  height: 12px;
  line-height: 8px;
}

.scroll svg, .tree .chev {
  width: 10px;
  height: 6px;
  stroke: #555;
  stroke-width: 2;
}

.thumb {
  width: 15px;
  height: 64px;
  background: #cdcdcd;
}

.scroll .down {
  margin-top: auto;
}

.slope {
  display: flex;
  flex: none;
  gap: 103px;
  height: 35px;
  padding-left: 72px;
  border: solid #a0a0a0;
  border-width: 0 1px 1px 0;
  box-shadow: inset 1px 1px #fff;
}

.slope label {
  display: flex;
  align-items: center;
  gap: 3px;
}

.slope input {
  appearance: none;
  width: 13px;
  height: 13px;
  margin: 0;
  border: 1px solid #333;
  border-radius: 50%;
  background: #fff;
}

.slope input:checked {
  background: radial-gradient(#333 0 4px, #fff 5px);
}

/* section drawing */
.section {
  flex: none;
  width: 100%;
  background: #000;
  shape-rendering: crispEdges;
}

.section .w {
  stroke: #fff;
}

.section .r {
  stroke: #f00;
  stroke-width: 2;
}

.section .dots {
  stroke: #ff0;
  stroke-width: 2;
  stroke-dasharray: 2.5 12.3;
}

.cn text {
  font: 17px "Noto Sans CJK SC", sans-serif;
  font-weight: 300;
  fill: #fff;
}

.en text {
  font: 15px "Liberation Mono", monospace;
  fill: #0f0;
}

.section-foot {
  flex: none;
  height: 45px;
  padding: 12px 25px 0 0;
  margin-bottom: 6px;
  text-align: right;
  border: solid #a0a0a0;
  border-width: 0 1px 1px 0;
}

.section-foot button {
  width: 73px;
  height: 23px;
  border: 1px solid #adadad;
  background: #e1e1e1;
}

/* component list */
.list-title {
  display: flex;
  flex: none;
  gap: 8px;
  height: 16px;
  padding-right: 4px;
  border: 1px solid #808080;
  border-left: 0;
  font-size: 13px;
  line-height: 14px;
}

.list-title span {
  flex: 1;
}

.list-title svg {
  width: 10px;
  height: 10px;
  stroke: #000;
}

.list-bar {
  display: flex;
  flex: none;
  gap: 7px;
  height: 27px;
  padding-left: 5px;
  background: linear-gradient(#fafafa, #eee);
}

.list-bar button {
  display: flex;
  align-items: center;
  gap: 3px;
}

.caret {
  border: 3px solid transparent;
  border-top-color: currentColor;
  border-bottom: 0;
}

.search {
  display: flex;
  flex: none;
  height: 26px;
}

.search input {
  flex: 1;
  min-width: 0;
  margin: 1px 0 1px 1px;
  padding: 0 2px 4px;
  border: 1px solid #707070;
  background: #fff;
}

.search button {
  width: 25px;
}

.search svg {
  width: 14px;
  height: 14px;
  vertical-align: middle;
}

.tree {
  flex: 1;
  border: solid #828790;
  border-width: 2px 1px 0;
  background: #fff;
}

.tree li {
  display: flex;
  align-items: center;
  gap: 5px;
  height: 16px;
  padding-left: 7px;
}

.tree .lv2 {
  padding-left: 25px;
}

.tree .lv3 {
  padding-left: 50px;
}

.lv3::before {
  content: "";
  width: 9px;
  height: 16px;
  margin-right: -5px;
  border-left: 1px dotted #777;
  background: repeating-linear-gradient(90deg, #777 0 1px, transparent 1px 3px) 0 8px / 100% 1px no-repeat;
}

.node {
  display: flex;
  align-items: center;
  padding: 0 4px 0 1px;
}

.node svg {
  margin-right: 5px;
}

.picked {
  background: #316ac5;
}

/* toolbars */
.work {
  flex: 1;
  min-width: 0;
  display: flex;
  flex-direction: column;
}

.bar {
  display: flex;
  flex: none;
  align-items: center;
  overflow: hidden;
  background: linear-gradient(#fbfbfb, #f1f1f1);
}

.bar-top {
  height: 28px;
  margin: 4px 0 1px;
}

.bar-top .sep {
  margin: 0 1px 0 0;
}

.bar-draw {
  height: 28px;
}

.bar-snap {
  height: 30px;
}

.grip {
  flex: none;
  width: 2px;
  height: 14px;
  margin: 0 2px 0 4px;
  background: repeating-linear-gradient(#b0b0b0 0 2px, transparent 2px 4px);
}

.grip.second {
  margin: 0 2px 0 6px;
}

.combo {
  flex: none;
  display: flex;
  align-items: center;
  width: 66px;
  height: 23px;
  margin-right: 6px;
  background: #fff;
}

.combo::after {
  content: "";
  margin: 0 2px 0 -8px;
  border: 3px solid transparent;
  border-top-color: #000;
  border-bottom: 0;
}

.combo.short {
  width: 54px;
  margin-left: 3px;
}

.combo.boxed {
  width: 56px;
  margin: 0 1px;
  border: 1px solid #777;
  background: #f5f5f5;
}

.combo.boxed::after {
  border-top-color: #777;
}

.combo select {
  appearance: none;
  width: 100%;
  height: 16px;
  padding: 0;
  border: 0;
  background: none;
}

.sep {
  flex: none;
  width: 2px;
  height: 16px;
  margin: 0 2px;
  background: #c4c4c4;
  border-right: 1px solid #fff;
}

.tool {
  display: flex;
  flex: none;
  align-items: center;
  gap: 3px;
  height: 24px;
  padding: 0 3px;
  border: 1px solid transparent;
}

.tool.on {
  border-color: #0078d7;
  background: #dce9f5;
}

.tool.sq {
  width: 23px;
}

.dim {
  color: #888;
}

.drop {
  display: flex;
  flex: none;
  justify-content: center;
  width: 12px;
}

.tiny {
  font: bold 7px "Liberation Sans", sans-serif;
  fill: #000;
}

/* 3D view */
.view3d {
  flex: 1;
  min-height: 0;
  width: 100%;
  background: #000;
  shape-rendering: crispEdges;
}

.axis, .view3d circle {
  stroke: #008000;
}

.red {
  stroke: #f00;
}

.dim3 text {
  font: 15px Roboto, sans-serif;
  fill: #ddd;
  text-anchor: middle;
}

.dim3 .mark {
  font-weight: 500;
}

/* rebar table */
.rebar {
  display: flex;
  height: 184px;
}

.dock {
  flex: 0 0 13px;
  padding: 4px 1px 0 2px;
  border-right: 1px solid #c0c0c0;
  background: radial-gradient(circle at 2px 2px, #bbb 1px, transparent 1px) 2px 0 / 5px 5px #f0f0f0;
}

.dock button {
  display: block;
  width: 10px;
  height: 10px;
  background: #f0f0f0;
}

.dock svg {
  display: block;
}

.rebar-main {
  flex: 1;
  min-width: 0;
  display: flex;
  flex-direction: column;
}

.bar-edit {
  height: 26px;
  margin: 3px 0 2px;
}

.sheet {
  flex: 1;
  overflow: hidden;
  background: #fff;
  border-top: 1px solid #a0a0a0;
}

.bars {
  width: 599px;
}

.b-num { width: 33px; }
.b-name { width: 73px; }
.b-dia { width: 56px; }
.b-lvl { width: 36px; }
.b-fig { width: 33px; }
.b-shape { width: 201px; }
.b-calc { width: 167px; }

.grid .edit {
  border-right-color: #000;
}

.grid .mark {
  font: 10px/16px "DejaVu Sans", sans-serif;
}

/* callouts */
.marks {
  position: absolute;
  inset: 0;
  width: 100%;
  height: 100%;
  pointer-events: none;
}

.marks ellipse {
  stroke: #e04040;
}
```
